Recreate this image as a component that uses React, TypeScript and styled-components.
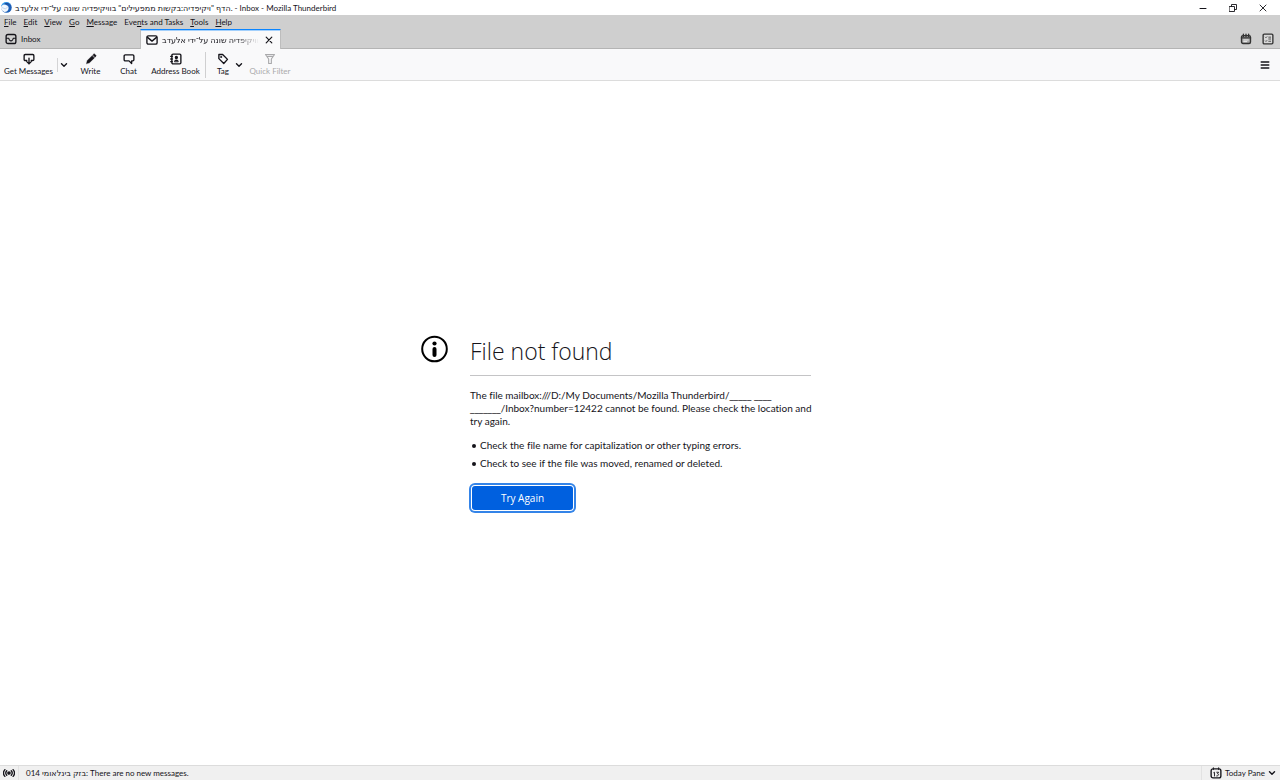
import React from "react";
import styled, { createGlobalStyle, css } from "styled-components";

const ink = "#15141a";

const GlobalStyle = createGlobalStyle`
  * { box-sizing: border-box; }
  html, body, #root { height: 100%; }
  body {
    margin: 0;
    background: #fff;
    color: ${ink};
    font-family: Lato, "DejaVu Sans", "Open Sans", sans-serif;
    font-size: 8px;
    font-variant-ligatures: none;
    line-height: 10px;
  }
  button { font: inherit; color: inherit; border: 0; padding: 0; background: none; }
`;

const Shell = styled.div`
  display: flex;
  flex-direction: column;
  min-height: 100vh;
`;

const TitleBar = styled.header`
  display: flex;
  align-items: center;
  height: 15px;
  gap: 3px;
  padding: 0 2px 0 1px;
`;

const WindowTitle = styled.h1`
  flex: 1;
  margin: 0;
  font-size: 8px;
  font-weight: 400;
  white-space: nowrap;
`;

const WindowControls = styled.div`
  display: flex;
`;

const WindowButton = styled.button`
  display: grid;
  place-items: center;
  width: 30px;
  height: 14px;
`;

const MenuBar = styled.nav`
  display: flex;
  align-items: center;
  height: 14px;
  gap: 7px;
  padding-left: 4px;
  background: #cfcfcf;
`;

const AccessKey = styled.span`
  text-decoration: underline;
`;

const TabStrip = styled.div`
  display: flex;
  height: 20px;
  background: #cfcfcf;
  border-bottom: 1px solid #b4b4b4;
`;

const Tab = styled.div<{ $active?: boolean }>`
  display: flex;
  align-items: center;
  width: ${(p) => (p.$active ? 141 : 140)}px;
  height: 20px;
  gap: 4px;
  padding: 0 5px;
  ${(p) =>
    p.$active &&
    css`
      background: #f9f9fa;
      border: 1px solid #bdbdbd;
      border-top-color: #0a84ff;
      border-bottom: 0;
      box-shadow: inset 0 1px #a3d0fc;
    `}
`;

const TabLabel = styled.button<{ $faded?: boolean }>`
  flex: 1;
  min-width: 0;
  overflow: hidden;
  text-align: left;
  white-space: nowrap;
  ${(p) =>
    p.$faded &&
    css`
      mask-image: linear-gradient(to right, #000 76%, transparent);
    `}
`;

const IconButton = styled.button`
  display: grid;
  place-items: center;
  width: 12px;
  height: 12px;
`;

const TabTools = styled.div`
  display: flex;
  align-items: center;
  gap: 10px;
  margin-left: auto;
  padding-right: 6px;
  color: #333;
`;

const Toolbar = styled.div`
  display: flex;
  align-items: center;
  height: 32px;
  padding-right: 9px;
  background: #f9f9fa;
  border-bottom: 1px solid #dcdcdc;
`;

const ToolButton = styled.button<{ $width: number }>`
  display: flex;
  flex-direction: column;
  align-items: center;
  gap: 1px;
  width: ${(p) => p.$width}px;
  white-space: nowrap;

  &:disabled { color: #a9a9ab; }
`;

const ChevronButton = styled.button<{ $divided?: boolean }>`
  display: grid;
  place-items: center;
  width: 13px;
  height: 14px;
  border-left: 1px solid ${(p) => (p.$divided ? "#d4d4d5" : "transparent")};
`;

const Separator = styled.span`
  width: 1px;
  height: 26px;
  margin-right: 8px;
  background: #cfcfd0;
`;

const AppMenuButton = styled(IconButton)`
  margin-left: auto;
`;

const Page = styled.main`
  flex: 1;
  display: flex;
  align-items: center;
  justify-content: center;
  padding-right: 48px;
`;

const ErrorPanel = styled.section`
  display: flex;
  align-items: flex-start;
  gap: 21px;
  width: 390px;
  font-size: 10px;
  line-height: 14px;
`;

const ErrorIcon = styled.div`
  flex: none;
  width: 28px;
`;

const ErrorBody = styled.div`
  flex: 1;
`;

const ErrorTitle = styled.h2`
  margin: 0 0 13px;
  padding-bottom: 8px;
  border-bottom: 1px solid #c4c4c6;
  font-family: "Open Sans", "Noto Sans", sans-serif;
  font-size: 23px;
  font-weight: 300;
  line-height: 32px;
`;

const ErrorText = styled.p`
  margin: 0 0 10px;
  line-height: 13px;
  white-space: nowrap;
`;

const Blank = styled.span`
  font-family: "Open Sans", "Noto Sans", sans-serif;
`;

const Hints = styled.ul`
  margin: 0;
  padding-left: 10px;
  list-style: none;

  li { margin-bottom: 4px; }
  li::before {
    content: "";
    float: left;
    width: 4px;
    height: 4px;
    margin: 6px 0 0 -8px;
    border-radius: 50%;
    background: ${ink};
  }
`;

const RetryButton = styled.button`
  display: block;
  width: 101px;
  height: 24px;
  margin: 16px 2px 2px;
  border-radius: 3px;
  background: #0060df;
  color: #fff;
  font-family: "Open Sans", "Noto Sans", sans-serif;
  font-weight: 500;
  box-shadow: 0 0 0 1px #fff, 0 0 0 3px #3484e8;
`;

const StatusBar = styled.footer`
  display: flex;
  align-items: center;
  height: 15px;
  background: #f0f0f0;
  border-top: 1px solid #dcdcdc;
`;

const StatusIcon = styled.div`
  display: grid;
  place-items: center;
  width: 19px;
  height: 14px;
  border-right: 1px solid #e2e2e2;
`;

const StatusText = styled.span`
  flex: 1;
  padding-left: 7px;
`;

const TodayButton = styled.button`
  display: flex;
  align-items: center;
  gap: 3px;
  padding: 0 4px 0 8px;
  height: 14px;
  border-left: 1px solid #e2e2e2;
`;

type IconProps = {
  children: React.ReactNode;
  size?: number;
  weight?: number;
  box?: number;
};

const Icon = ({ children, size = 12, weight = 1.8, box = 16 }: IconProps) => (
  <svg
    width={size}
    height={size}
    viewBox={`0 0 ${box} ${box}`}
    fill="none"
    stroke="currentColor"
    strokeWidth={weight}
    strokeLinecap="round"
    strokeLinejoin="round"
    aria-hidden="true"
  >
    {children}
  </svg>
);

const Chevron = () => (
  <Icon size={8} box={8} weight={1.4}>
    <path d="M1.5 2.8 4 5.2 6.5 2.8" />
  </Icon>
);

const Logo = () => (
  <svg width="11" height="11" viewBox="0 0 22 22" aria-hidden="true">
    <circle cx="11" cy="11" r="10.5" fill="#1c5fb8" />
    <path d="M0 9C1 4 5 0 11 0c4 0 7 2 9 5-5-3-9-2-12 1C5 5 3 6 0 9z" fill="#3aa0ee" />
    <path d="M0 11c1-5 6-7 10-5 4 1 6 4 5 8-1 4-4 6-8 6-4-1-7-5-7-9z" fill="#f4f8fd" />
    <path d="M2 11l7 3 5-5" fill="none" stroke="#9fc0e6" strokeWidth="1.2" />
    <path d="M6 4C9 1 13 1 16 3l-1 2c-3-1-5-1-7 0z" fill="#1d4f9f" />
  </svg>
);

const menus = [
  ["", "F", "ile"],
  ["", "E", "dit"],
  ["", "V", "iew"],
  ["", "G", "o"],
  ["", "M", "essage"],
  ["Eve", "n", "ts and Tasks"],
  ["", "T", "ools"],
  ["", "H", "elp"],
];

const subject = "הדף \"ויקיפדיה:בקשות ממפעילים\" בוויקיפדיה שונה על־ידי אלעדב.";

export default function App() {
  return (
    <Shell>
      <GlobalStyle />
      <TitleBar>
        <Logo />
        <WindowTitle>{subject} - Inbox - Mozilla Thunderbird</WindowTitle>
        <WindowControls>
          <WindowButton aria-label="Minimize">
            <Icon size={8} box={8} weight={1}><path d="M1 4.500h6" /></Icon>
          </WindowButton>
          <WindowButton aria-label="Restore">
            <Icon size={8} box={8} weight={0.9}>
              <path d="M.500 2.500h5v5h-5zM2.500 2.500v-2h5v5h-2" />
            </Icon>
          </WindowButton>
          <WindowButton aria-label="Close">
            <Icon size={8} box={8} weight={0.9}><path d="M1 1l6 6M7 1 1 7" /></Icon>
          </WindowButton>
        </WindowControls>
      </TitleBar>

      <MenuBar>
        {menus.map(([before, key, after]) => (
          <button key={before + key + after}>
            {before}<AccessKey>{key}</AccessKey>{after}
          </button>
        ))}
      </MenuBar>

      <TabStrip>
        <Tab>
          <Icon>
            <rect x="1.500" y="2" width="13" height="12" rx="2.500" />
            <path d="M2 7h3c.5 2.500 1.500 3.500 3 3.500s2.500-1 3-3.500h3" strokeWidth="1.500" />
          </Icon>
          <TabLabel>Inbox</TabLabel>
        </Tab>
        <Tab $active>
          <Icon>
            <rect x="1.200" y="2.500" width="13.600" height="11" rx="2" />
            <path d="M2 4.500l6 5 6-5" />
          </Icon>
          <TabLabel $faded>{subject}</TabLabel>
          <IconButton aria-label="Close tab">
            <Icon size={8} box={8} weight={1.2}><path d="M1.200 1.200l5.600 5.600M6.800 1.200 1.200 6.800" /></Icon>
          </IconButton>
        </Tab>
        <TabTools>
          <IconButton aria-label="Calendar">
            <Icon>
              <path d="M4 3.500h8a2 2 0 0 1 2 2V12a2 2 0 0 1-2 2H4a2 2 0 0 1-2-2V5.500a2 2 0 0 1 2-2z" fill="#a8a8a8" />
              <path d="M4.500 1.500v3M8 1.500v3M11.500 1.500v3M2 6.500h12" />
              <path d="M5 9.300h6M5 11.500h4" strokeWidth="1.200" stroke="#f4f4f4" />
            </Icon>
          </IconButton>
          <IconButton aria-label="Tasks">
            <Icon>
              <rect x="1.500" y="1.500" width="13" height="13" rx="1.500" fill="#d8d8d8" />
              <path d="M4.500 5.500l.8.800L6.500 5M4.500 10.500l.8.800L6.500 10M9 5.500h2.500M9 8h2.500M9 11h2.500" strokeWidth="1.200" stroke="#444" />
            </Icon>
          </IconButton>
        </TabTools>
      </TabStrip>

      <Toolbar>
        <ToolButton $width={57}>
          <Icon>
            <path d="M5 10H3a1.500 1.500 0 0 1-1.500-1.500V3.500A1.500 1.500 0 0 1 3 2h10a1.500 1.500 0 0 1 1.500 1.500v5A1.500 1.500 0 0 1 13 10h-2M8 7v7.500M5 11.500l3 3 3-3" />
          </Icon>
          Get Messages
        </ToolButton>
        <ChevronButton $divided aria-label="Get messages options"><Chevron /></ChevronButton>
        <ToolButton $width={41}>
          <Icon weight={0.5}>
            <path fill="currentColor" d="M2 14l1-4 6.500-6.500 3 3L6 13zM10.300 2.700l1.200-1.200c.5-.5 1-.5 1.500 0l1.500 1.500c.5.5.5 1 0 1.500l-1.200 1.200z" />
          </Icon>
          Write
        </ToolButton>
        <ToolButton $width={35}>
          <Icon>
            <path d="M3 2.500h10A1.500 1.500 0 0 1 14.500 4v5a1.500 1.500 0 0 1-1.500 1.500h-1.500V14L8 10.500H3A1.500 1.500 0 0 1 1.500 9V4A1.500 1.500 0 0 1 3 2.500z" />
          </Icon>
          Chat
        </ToolButton>
        <ToolButton $width={59}>
          <Icon>
            <rect x="2.500" y="1.500" width="12" height="13" rx="1.500" />
            <path d="M1 4.500h2M1 8h2M1 11.500h2" />
            <circle cx="8.500" cy="6" r="1.300" fill="currentColor" />
            <path d="M6 11.300c0-1.500 1-2 2.500-2s2.500.5 2.500 2z" fill="currentColor" strokeWidth="1" />
          </Icon>
          Address Book
        </ToolButton>
        <Separator />
        <ToolButton $width={18}>
          <Icon>
            <path d="M2.500 2h5l6.500 6.500-5 5.500L2.500 7.500z" />
            <circle cx="5.600" cy="5.300" r=".5" fill="currentColor" />
          </Icon>
          Tag
        </ToolButton>
        <ChevronButton aria-label="Tag options"><Chevron /></ChevronButton>
        <ToolButton $width={50} disabled>
          <Icon weight={1.5}>
            <path d="M2 2h12L9.800 8v6H6.200V8zM4 4.500h8" />
          </Icon>
          Quick Filter
        </ToolButton>
        <AppMenuButton aria-label="Application menu">
          <Icon weight={2}><path d="M3 4h10M3 8h10M3 12h10" /></Icon>
        </AppMenuButton>
      </Toolbar>

      <Page>
        <ErrorPanel>
          <ErrorIcon>
            <svg width="28" height="28" viewBox="0 0 28 28" aria-hidden="true">
              <circle cx="13.500" cy="14" r="12.300" fill="none" stroke="#000" strokeWidth="2" />
              <circle cx="13.500" cy="8.500" r="2.100" />
              <rect x="11.500" y="12" width="4" height="10" rx="2" />
            </svg>
          </ErrorIcon>
          <ErrorBody>
            <ErrorTitle>File not found</ErrorTitle>
            <ErrorText>
              The file mailbox:///D:/My Documents/Mozilla Thunderbird/<Blank>_____ ____</Blank>
              <br />
              <Blank>_______</Blank>/Inbox?number=12422 cannot be found. Please check the location and
              <br />
              try again.
            </ErrorText>
            <Hints>
              <li>Check the file name for capitalization or other typing errors.</li>
              <li>Check to see if the file was moved, renamed or deleted.</li>
            </Hints>
            <RetryButton>Try Again</RetryButton>
          </ErrorBody>
        </ErrorPanel>
      </Page>

      <StatusBar>
        <StatusIcon>
          <Icon>
            <circle cx="8" cy="8" r="1.500" fill="currentColor" />
            <path d="M5 5a4.500 4.500 0 0 0 0 6M11 5a4.500 4.500 0 0 1 0 6M2.500 3.500a7 7 0 0 0 0 9M13.500 3.500a7 7 0 0 1 0 9" />
          </Icon>
        </StatusIcon>
        <StatusText>בזק בינלאומי 014: There are no new messages.</StatusText>
        <TodayButton>
          <Icon>
            <rect x="1.500" y="2.500" width="13" height="12" rx="2.500" />
            <path d="M4.500 1v2.500M11.500 1v2.500M5 7.500l1-.5v5M9 7h2.500L10 9c2 0 2 3-1 3" strokeWidth="1.200" />
          </Icon>
          Today Pane
          <Chevron />
        </TodayButton>
      </StatusBar>
    </Shell>
  );
}
